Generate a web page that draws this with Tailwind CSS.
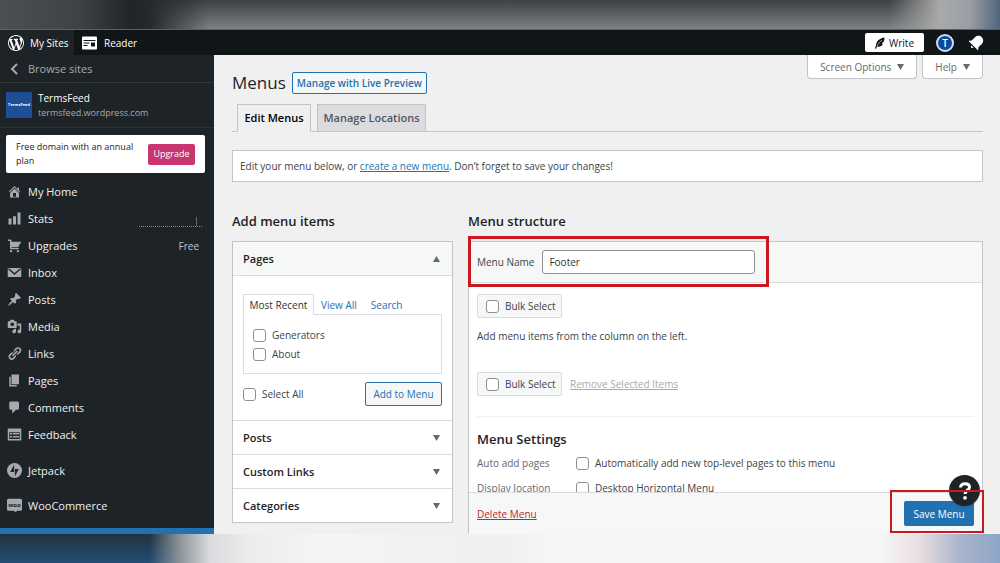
<!DOCTYPE html>
<html lang="en">
<head>
  <meta charset="UTF-8" />
  <meta name="viewport" content="width=device-width, initial-scale=1" />
  <title>Menus - TermsFeed</title>
  <script src="https://cdn.jsdelivr.net/npm/@tailwindcss/browser@4"></script>
</head>
<body class="h-screen flex flex-col overflow-hidden bg-[#f0f0f1] font-['Open_Sans','Noto_Sans',sans-serif] text-[10px] leading-4 text-[#50575e]">

  <!-- Top band -->
  <div class="h-[29px] shrink-0 bg-[linear-gradient(to_right,#4b5053_0%,#3d4245_8%,#202529_13%,#25292c_15%,transparent_21%,transparent_89%,#a9a9a9_94%,#9a9fa4_97%,#50657a_100%),linear-gradient(to_bottom,#3d4143,#7e8283)]"></div>

  <!-- Admin bar -->
  <header class="h-[26px] shrink-0 flex items-stretch border-t border-[#5b6062] bg-[#101517] text-white">
    <a href="#" class="flex items-center gap-1.5 w-[74px] pl-2 bg-[#1d2327] whitespace-nowrap">
      <svg class="size-4 shrink-0" viewBox="0 0 20 20" fill="currentColor"><path d="M20 10c0-5.51-4.49-10-10-10C4.48 0 0 4.49 0 10c0 5.52 4.48 10 10 10 5.51 0 10-4.48 10-10zM7.78 15.37L4.37 6.22c.55-.02 1.17-.08 1.17-.08.5-.06.44-1.13-.06-1.11 0 0-1.45.11-2.37.11-.18 0-.37 0-.58-.01C4.12 2.69 6.87 1.11 10 1.11c2.33 0 4.45.87 6.05 2.34-.68-.11-1.65.39-1.65 1.58 0 .74.45 1.36.9 2.1.35.61.55 1.36.55 2.46 0 1.49-1.4 5-1.4 5l-3.03-8.37c.54-.02.82-.17.82-.17.5-.05.44-1.25-.06-1.22 0 0-1.44.12-2.38.12-.87 0-2.33-.12-2.33-.12-.5-.03-.56 1.2-.06 1.22l.92.08 1.26 3.41zM17.41 10c.24-.64.74-1.87.43-4.25.7 1.29 1.05 2.71 1.05 4.25 0 3.29-1.73 6.24-4.4 7.78.97-2.59 1.94-5.2 2.92-7.78zM6.1 18.09C3.12 16.65 1.11 13.53 1.11 10c0-1.3.23-2.48.72-3.59C3.25 10.3 4.67 14.2 6.1 18.09zm4.03-6.63l2.58 6.98c-.86.29-1.76.45-2.71.45-.79 0-1.57-.11-2.29-.33.81-2.38 1.62-4.74 2.42-7.1z"/></svg>
      My Sites
    </a>
    <a href="#" class="flex items-center gap-1.5 pl-2">
      <svg class="w-4 h-3.5" viewBox="0 0 16 14"><rect y="0.500" width="15" height="13" rx="1" fill="#fff"/><path d="M1.500 4.500h12M1.500 7h6M1.500 9.500h4" stroke="#101517"/><rect x="9" y="6.500" width="4" height="4" fill="#101517"/></svg>
      Reader
    </a>
    <div class="ml-auto flex items-center pr-4">
      <button type="button" class="flex items-center justify-center gap-1 w-[59px] h-[19px] rounded-xs bg-white text-[#101517]">
        <svg class="w-2.5 h-3" viewBox="0 0 10 12"><path d="M9.500 0.500C5.500 1 1.500 3.500 1 8L0 11.500l1 .2 1-2c3.500.3 5.500-1.200 5.800-3L6.500 6.500 8.500 5c.8-1.500 1-3 1-4.500z" fill="#101517"/><path d="M2 9.500C3 7 4.500 5 7 3" stroke="#fff" stroke-width=".6" fill="none"/></svg>
        Write
      </button>
      <span class="ml-3 size-[18px] rounded-full border-2 border-[#cfe0ee] bg-[#0a4b9c] flex items-center justify-center font-semibold">T</span>
      <svg class="ml-3.5 size-4" viewBox="2 2 20 20" fill="#fff"><path d="M6.140 14.970l2.828 2.827c-.362.362-.862.586-1.414.586-1.105 0-2-.895-2-2 0-.552.224-1.052.586-1.414zm8.867 5.324L14.300 21 3 9.700l.706-.707 1.102.157c.754.108 1.690-.122 2.077-.510l3.885-3.884c2.340-2.340 6.135-2.340 8.475 0s2.340 6.135 0 8.475l-3.885 3.886c-.388.388-.618 1.323-.510 2.077l.157 1.100z"/></svg>
    </div>
  </header>

  <div class="flex-1 min-h-0 flex">

    <!-- Sidebar -->
    <nav class="w-[214px] shrink-0 flex flex-col overflow-hidden bg-[#1d2327] text-[11px] text-[#f0f0f1]">
      <a href="#" class="h-7 shrink-0 flex items-center gap-2 pl-2.5 border-b border-[#32373c] text-[#a7aaad]">
        <svg class="w-2.5 h-3" viewBox="0 0 10 12" fill="none" stroke="currentColor" stroke-width="2"><path d="M7 1L2 6l5 5"/></svg>
        Browse sites
      </a>
      <a href="#" class="h-[45px] shrink-0 flex items-center gap-1.5 pl-1.5 border-b border-[#2c3338]">
        <span class="size-[26px] bg-[#1c4f96] flex items-center justify-center text-[4px] font-bold text-white">TermsFeed</span>
        <span>
          <span class="block text-[10px] text-white">TermsFeed</span>
          <span class="block text-[9px] leading-[14px] text-[#a7aaad]">termsfeed.wordpress.com</span>
        </span>
      </a>
      <div class="mt-[7px] mb-[5px] ml-1.5 mr-[9px] h-[38px] shrink-0 flex items-center justify-between rounded-xs bg-white px-2.5 text-[9px] leading-[14px] text-[#1d2327]">
        <span class="w-[124px]">Free domain with an annual plan</span>
        <button type="button" class="h-[21px] w-[47px] rounded-xs bg-[#c9356e] text-white">Upgrade</button>
      </div>
      <ul class="[&>li]:h-[27px] [&_a]:h-full [&_a]:flex [&_a]:items-center [&_a]:gap-1.5 [&_a]:pl-[7px] [&_svg]:size-[15px] [&_svg]:fill-[#a7aaad]">
        <li><a href="#"><svg viewBox="0 0 20 20"><path d="M16 8.500l1.530 1.530-1.060 1.060L10 4.600l-6.470 6.490-1.060-1.060L10 2.500l4 4v-2h2v4zm-6-2.460l6 5.990V18H4v-5.970zM12 17v-5H8v5h4z"/></svg>My Home</a></li>
        <li><a href="#"><svg viewBox="0 0 20 20"><path d="M18 18V2h-4v16h4zm-6 0V7H8v11h4zm-6 0v-8H2v8h4z"/></svg>Stats
          <span class="ml-auto mr-3 w-[63px] h-2.5 mt-1.5 border-b border-dotted border-[#8c8f94] flex justify-end pr-[5px]"><span class="w-px h-full bg-[#646970]"></span></span></a></li>
        <li><a href="#"><svg viewBox="0 0 20 20"><path d="M6 13h9c.55 0 1 .45 1 1s-.45 1-1 1H5c-.55 0-1-.45-1-1V4H2c-.55 0-1-.45-1-1s.45-1 1-1h3c.55 0 1 .45 1 1v2h13l-4 7H6v1zm-.5 3c.83 0 1.500.67 1.500 1.500S6.330 19 5.500 19 4 18.330 4 17.500 4.670 16 5.500 16zm9 0c.83 0 1.500.67 1.500 1.500s-.67 1.500-1.500 1.500-1.500-.67-1.500-1.500.67-1.500 1.500-1.500z"/></svg>Upgrades<span class="ml-auto mr-[15px] text-[10px] text-[#c3c4c7]">Free</span></a></li>
        <li><a href="#"><svg viewBox="0 0 20 20"><path d="M1 4h18v12H1z"/><path d="M2 5l8 7 8-7" fill="none" stroke="#1d2327" stroke-width="1.800"/></svg>Inbox</a></li>
        <li><a href="#"><svg viewBox="0 0 20 20"><path d="M10.440 3.020l1.820-1.820 6.360 6.350-1.830 1.820c-1.050-.68-2.480-.57-3.410.36l-.75.75c-.92.93-1.040 2.350-.35 3.410l-1.830 1.820-2.410-2.410-2.800 2.790c-.42.42-3.380 2.710-3.800 2.290s1.860-3.390 2.280-3.810l2.790-2.790L4.100 9.360l1.830-1.820c1.050.69 2.480.57 3.400-.36l.75-.75c.93-.92 1.050-2.350.36-3.410z"/></svg>Posts</a></li>
        <li><a href="#"><svg viewBox="0 0 20 20"><path d="M13 11V4c0-.55-.45-1-1-1h-1.670L9 1H5L3.670 3H2c-.55 0-1 .45-1 1v7c0 .55.45 1 1 1h10c.55 0 1-.45 1-1zM7 4.500c1.380 0 2.500 1.120 2.500 2.500S8.380 9.500 7 9.500 4.500 8.380 4.500 7 5.620 4.500 7 4.500zM14 6h5v10.500c0 1.380-1.120 2.500-2.500 2.500S14 17.880 14 16.500s1.120-2.500 2.500-2.500c.17 0 .34.02.5.05V9h-3V6zm-4 8.050V13h2v3.500c0 1.380-1.120 2.500-2.500 2.500S7 17.880 7 16.500 8.120 14 9.500 14c.17 0 .34.02.5.05z"/></svg>Media</a></li>
        <li><a href="#"><svg viewBox="0 0 20 20"><path d="M17.740 2.760c1.680 1.690 1.680 4.410 0 6.100l-1.530 1.520c-1.120 1.120-2.700 1.470-4.140 1.090l2.620-2.610.76-.77.76-.76c.84-.84.84-2.200 0-3.040-.84-.85-2.200-.85-3.040 0l-.77.76-3.380 3.380c-.37-1.440-.02-3.020 1.100-4.140l1.520-1.530c1.690-1.680 4.420-1.680 6.100 0zM8.590 13.430l5.340-5.340c.42-.42.42-1.100 0-1.520-.44-.43-1.130-.39-1.530 0l-5.330 5.340c-.42.42-.42 1.100 0 1.520.44.43 1.130.39 1.520 0zm-.76 2.290l4.140-4.150c.38 1.440.03 3.020-1.090 4.140l-1.520 1.530c-1.690 1.680-4.410 1.680-6.100 0-1.680-1.680-1.680-4.420 0-6.100l1.530-1.520c1.120-1.120 2.700-1.470 4.140-1.100l-4.140 4.150c-.85.84-.85 2.200 0 3.050.84.84 2.200.84 3.040 0z"/></svg>Links</a></li>
        <li><a href="#"><svg viewBox="0 0 20 20"><path d="M6 15V2h10v13H6zm-1 1h8v2H3V5h2v11z"/></svg>Pages</a></li>
        <li><a href="#"><svg viewBox="0 0 20 20"><path d="M5 2h9c1.100 0 2 .9 2 2v7c0 1.100-.9 2-2 2h-2l-5 5v-5H5c-1.100 0-2-.9-2-2V4c0-1.100.9-2 2-2z"/></svg>Comments</a></li>
        <li><a href="#"><svg viewBox="0 0 20 20"><path d="M2 2h16c.55 0 1 .45 1 1v14c0 .55-.45 1-1 1H2c-.55 0-1-.45-1-1V3c0-.55.45-1 1-1zm15 14V7H3v9h14zM4 8v2h3V8H4zm4 0v2h8V8H8zm-4 4v2h3v-2H4zm4 0v2h8v-2H8z"/></svg>Feedback</a></li>
        <li class="mt-[9px]"><a href="#"><svg viewBox="0 0 20 20"><circle cx="10" cy="10" r="10"/><path d="M9.500 2v10H4.300zM10.500 18V8h5.200z" fill="#1d2327"/></svg>Jetpack</a></li>
        <li class="mt-2"><a href="#"><svg viewBox="0 0 20 20"><path d="M2 1h16a2 2 0 0 1 2 2v12a2 2 0 0 1-2 2h-5l-1 2-3-2H2a2 2 0 0 1-2-2V3a2 2 0 0 1 2-2z"/><text x="10" y="12" text-anchor="middle" font-size="8" font-weight="700" style="fill:#1d2327">woo</text></svg>WooCommerce</a></li>
      </ul>
      <div class="mt-auto h-1.5 shrink-0 bg-[#2271b1]"></div>
    </nav>

    <!-- Content -->
    <main class="relative flex-1 min-w-0 flex flex-col pl-[18px] pr-[17px]">
      <div class="flex items-start justify-between h-[49px] shrink-0">
        <div class="flex items-center gap-1.5 pt-4">
          <h1 class="text-[17px] leading-6 text-[#1d2327]">Menus</h1>
          <a href="#" class="h-[22px] flex items-center px-1 rounded-xs border border-[#2271b1] bg-[#f6f7f7] font-semibold text-[#2271b1]">Manage with Live Preview</a>
        </div>
        <div class="flex gap-[5px] text-[#646970]">
          <button type="button" class="h-6 px-3 flex items-center gap-1.5 rounded-b-sm border border-t-0 border-[#c3c4c7] bg-white">Screen Options <svg class="w-[7px] h-1.5" viewBox="0 0 7 6" fill="currentColor"><path d="M0 0h7L3.500 6z"/></svg></button>
          <button type="button" class="h-6 px-3 flex items-center gap-1.5 rounded-b-sm border border-t-0 border-[#c3c4c7] bg-white">Help <svg class="w-[7px] h-1.5" viewBox="0 0 7 6" fill="currentColor"><path d="M0 0h7L3.500 6z"/></svg></button>
        </div>
      </div>

      <div class="h-7 shrink-0 flex gap-1.5 pl-[5px] border-b border-[#c3c4c7] text-[11px] font-semibold">
        <a href="#" class="h-7 w-[74px] flex items-center justify-center border border-b-[#f0f0f1] border-[#c3c4c7] bg-[#f0f0f1] text-black whitespace-nowrap">Edit Menus</a>
        <a href="#" class="h-7 w-[109px] flex items-center justify-center border border-[#c3c4c7] bg-[#dcdcde] whitespace-nowrap">Manage Locations</a>
      </div>

      <p class="mt-[18px] h-8 shrink-0 flex items-center border border-[#c3c4c7] bg-white px-[7px] text-[#3c434a]"><span>Edit your menu below, or <a href="#" class="text-[#2271b1] underline">create a new menu</a>. Don’t forget to save your changes!</span></p>

      <div class="mt-[31px] flex-1 min-h-0 grid grid-cols-[221px_1fr] grid-rows-[28px_1fr] gap-x-[15px] text-[#3c434a]">
        <h2 class="text-[13px] leading-4 font-semibold text-[#1d2327]">Add menu items</h2>
        <h2 class="text-[13px] leading-4 font-semibold text-[#1d2327]">Menu structure</h2>

        <section class="self-start border border-[#c3c4c7] bg-white">
          <h3 class="h-[34px] border-b border-[#dcdcde] bg-[#f6f7f7] text-[11px] font-semibold text-[#1d2327]"><button type="button" class="size-full flex items-center justify-between px-2.5 pr-3">Pages <svg class="w-[7px] h-1.5" viewBox="0 0 7 6" fill="#646970"><path d="M0 6h7L3.500 0z"/></svg></button></h3>
          <div class="h-[145px] px-2.5 pt-[18px] border-b border-[#dcdcde]">
            <div class="flex h-5">
              <a href="#" class="h-[21px] relative w-[71px] flex items-center justify-center border border-b-white border-[#dcdcde] bg-white whitespace-nowrap text-[#2c3338]">Most Recent</a>
              <a href="#" class="px-[7px] pt-[3px] text-[#2271b1]">View All</a>
              <a href="#" class="px-[7px] pt-[3px] text-[#2271b1]">Search</a>
            </div>
            <div class="h-[60px] border border-[#dcdcde] px-[9px] pt-3 space-y-[3px]">
              <label class="flex items-center gap-1.5"><input type="checkbox" class="appearance-none size-[13px] rounded-[3px] border border-[#8c8f94] bg-white" />Generators</label>
              <label class="flex items-center gap-1.5"><input type="checkbox" class="appearance-none size-[13px] rounded-[3px] border border-[#8c8f94] bg-white" />About</label>
            </div>
            <div class="mt-2 flex items-center justify-between">
              <label class="flex items-center gap-1.5"><input type="checkbox" class="appearance-none size-[13px] rounded-[3px] border border-[#8c8f94] bg-white" />Select All</label>
              <button type="button" class="h-6 w-[77px] rounded-xs border border-[#2271b1] bg-[#f6f7f7] text-[#2271b1]">Add to Menu</button>
            </div>
          </div>
          <h3 class="h-[34px] border-b border-[#dcdcde] text-[11px] font-semibold text-[#1d2327]"><button type="button" class="size-full flex items-center justify-between px-2.5 pr-3">Posts <svg class="w-[7px] h-1.5" viewBox="0 0 7 6" fill="#646970"><path d="M0 0h7L3.500 6z"/></svg></button></h3>
          <h3 class="h-[34px] border-b border-[#dcdcde] text-[11px] font-semibold text-[#1d2327]"><button type="button" class="size-full flex items-center justify-between px-2.5 pr-3">Custom Links <svg class="w-[7px] h-1.5" viewBox="0 0 7 6" fill="#646970"><path d="M0 0h7L3.500 6z"/></svg></button></h3>
          <h3 class="h-[33px] text-[11px] font-semibold text-[#1d2327]"><button type="button" class="size-full flex items-center justify-between px-2.5 pr-3">Categories <svg class="w-[7px] h-1.5" viewBox="0 0 7 6" fill="#646970"><path d="M0 0h7L3.500 6z"/></svg></button></h3>
        </section>

        <form class="relative min-h-0 flex flex-col border border-b-0 border-[#c3c4c7] bg-white">
          <div class="h-[41px] shrink-0 flex items-center gap-2 px-2 border-b border-[#dcdcde] bg-[#f6f7f7]">
            <label for="menu-name">Menu Name</label>
            <input id="menu-name" type="text" value="Footer" class="w-[213px] h-6 px-1.5 rounded-[3px] border border-[#8c8f94] bg-white text-[#2c3338]" />
          </div>
          <div class="flex-1 min-h-0 overflow-hidden px-2 pt-[11px]">
            <label class="h-6 w-[85px] flex items-center gap-1.5 pl-2 rounded-xs border border-[#dcdcde] bg-[#f6f7f7]"><input type="checkbox" class="appearance-none size-[13px] rounded-[3px] border border-[#8c8f94] bg-white" />Bulk Select</label>
            <p class="mt-2.5">Add menu items from the column on the left.</p>
            <div class="mt-7 flex items-center gap-2">
              <label class="h-6 w-[85px] flex items-center gap-1.5 pl-2 rounded-xs border border-[#dcdcde] bg-[#f6f7f7]"><input type="checkbox" class="appearance-none size-[13px] rounded-[3px] border border-[#8c8f94] bg-white" />Bulk Select</label>
              <a href="#" class="text-[#a7aaad] underline">Remove Selected Items</a>
            </div>
            <div class="mt-5 pt-3.5 border-t border-[#f0f0f1]">
              <h3 class="text-[13px] leading-4 font-semibold text-[#1d2327]">Menu Settings</h3>
              <div class="mt-2 grid grid-cols-[99px_1fr] gap-y-[9px] text-[#646970]">
                <span>Auto add pages</span>
                <label class="flex items-center gap-1.5 text-[#3c434a]"><input type="checkbox" class="appearance-none size-[13px] rounded-[3px] border border-[#8c8f94] bg-white" />Automatically add new top-level pages to this menu</label>
                <span>Display location</span>
                <label class="flex items-center gap-1.5 text-[#3c434a]"><input type="checkbox" class="appearance-none size-[13px] rounded-[3px] border border-[#8c8f94] bg-white" />Desktop Horizontal Menu</label>
              </div>
            </div>
          </div>
          <div class="h-[42px] shrink-0 flex items-center justify-between px-2 border-t border-[#dcdcde] bg-[#f6f7f7]">
            <a href="#" class="text-[#b32d2e] underline">Delete Menu</a>
            <button type="submit" class="h-[25px] w-[70px] rounded-xs bg-[#2271b1] text-white">Save Menu</button>
          </div>
          <!-- Highlight around the name field -->
          <div class="absolute -left-px -top-[6px] w-[301px] h-[51px] border-3 border-[#c9181e] pointer-events-none"></div>
        </form>
      </div>

      <!-- Floating help button and highlight around Save -->
      <button type="button" aria-label="Help center" class="absolute right-5 bottom-7 size-[31px] rounded-full bg-[#1d2327] flex items-center justify-center text-white shadow">
        <svg class="w-3 h-[18px]" viewBox="0 0 12 18"><path d="M1.500 5.500C1.500 3 3.500 1.800 6 1.800s4.500 1.200 4.500 3.500C10.500 8 6 8.200 6 12" fill="none" stroke="#fff" stroke-width="3"/><circle cx="6" cy="15.800" r="1.900" fill="#fff"/></svg>
      </button>
      <div class="absolute right-4 bottom-px w-[94px] h-[43px] border-2 border-[#c9181e] pointer-events-none"></div>
    </main>
  </div>

  <!-- Bottom band -->
  <div class="h-[29px] shrink-0 bg-[linear-gradient(to_right,transparent_0%,transparent_15%,#8d949b_18%,#d9dbde_21%,#ececec_25%,#f5f5f5_32%,#f1efef_50%,#f6f6f6_55%,#f6f6f6_88%,#e9dde1_92%,#a9b4cb_96%,#8ea5c8_100%),linear-gradient(to_bottom,#22323f,#234e74)]"></div>

</body>
</html>
